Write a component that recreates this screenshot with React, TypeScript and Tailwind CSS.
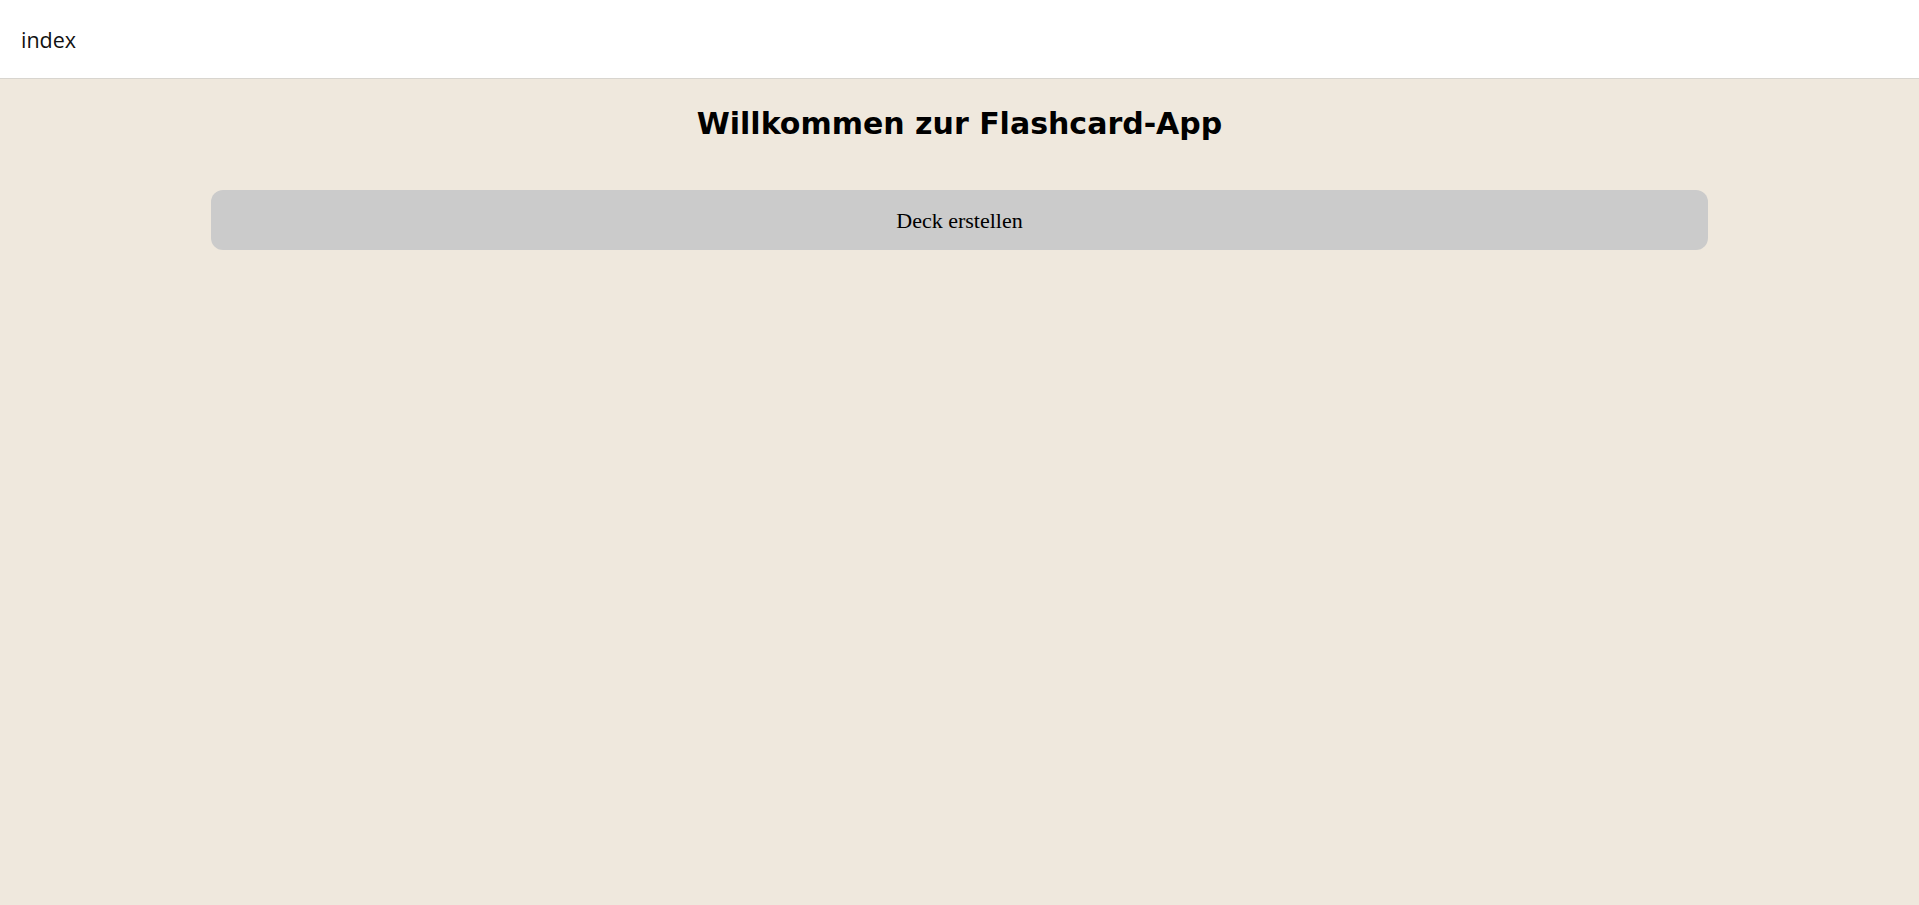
export default function App() {
  return (
    <div className="min-h-screen bg-[#efe8dd] flex flex-col">
      <header className="h-[79px] bg-white border-b border-[#d8d5cf] flex items-center px-[21px]">
        <span className="mt-[3px] text-[21.5px] text-[#111] font-['Open_Sans',sans-serif]">index</span>
      </header>
      <main className="flex flex-col items-center pt-[27px]">
        <h1 className="text-[30px] leading-[35px] font-bold text-black font-['Verdana','DejaVu_Sans',sans-serif]">
          Willkommen zur Flashcard-App
        </h1>
        <button className="mt-[49px] w-[78%] h-[60px] rounded-[12px] bg-[#cbcbcb] text-[22px] text-black font-['Georgia','Liberation_Serif',serif]">
          Deck erstellen
        </button>
      </main>
    </div>
  );
}
